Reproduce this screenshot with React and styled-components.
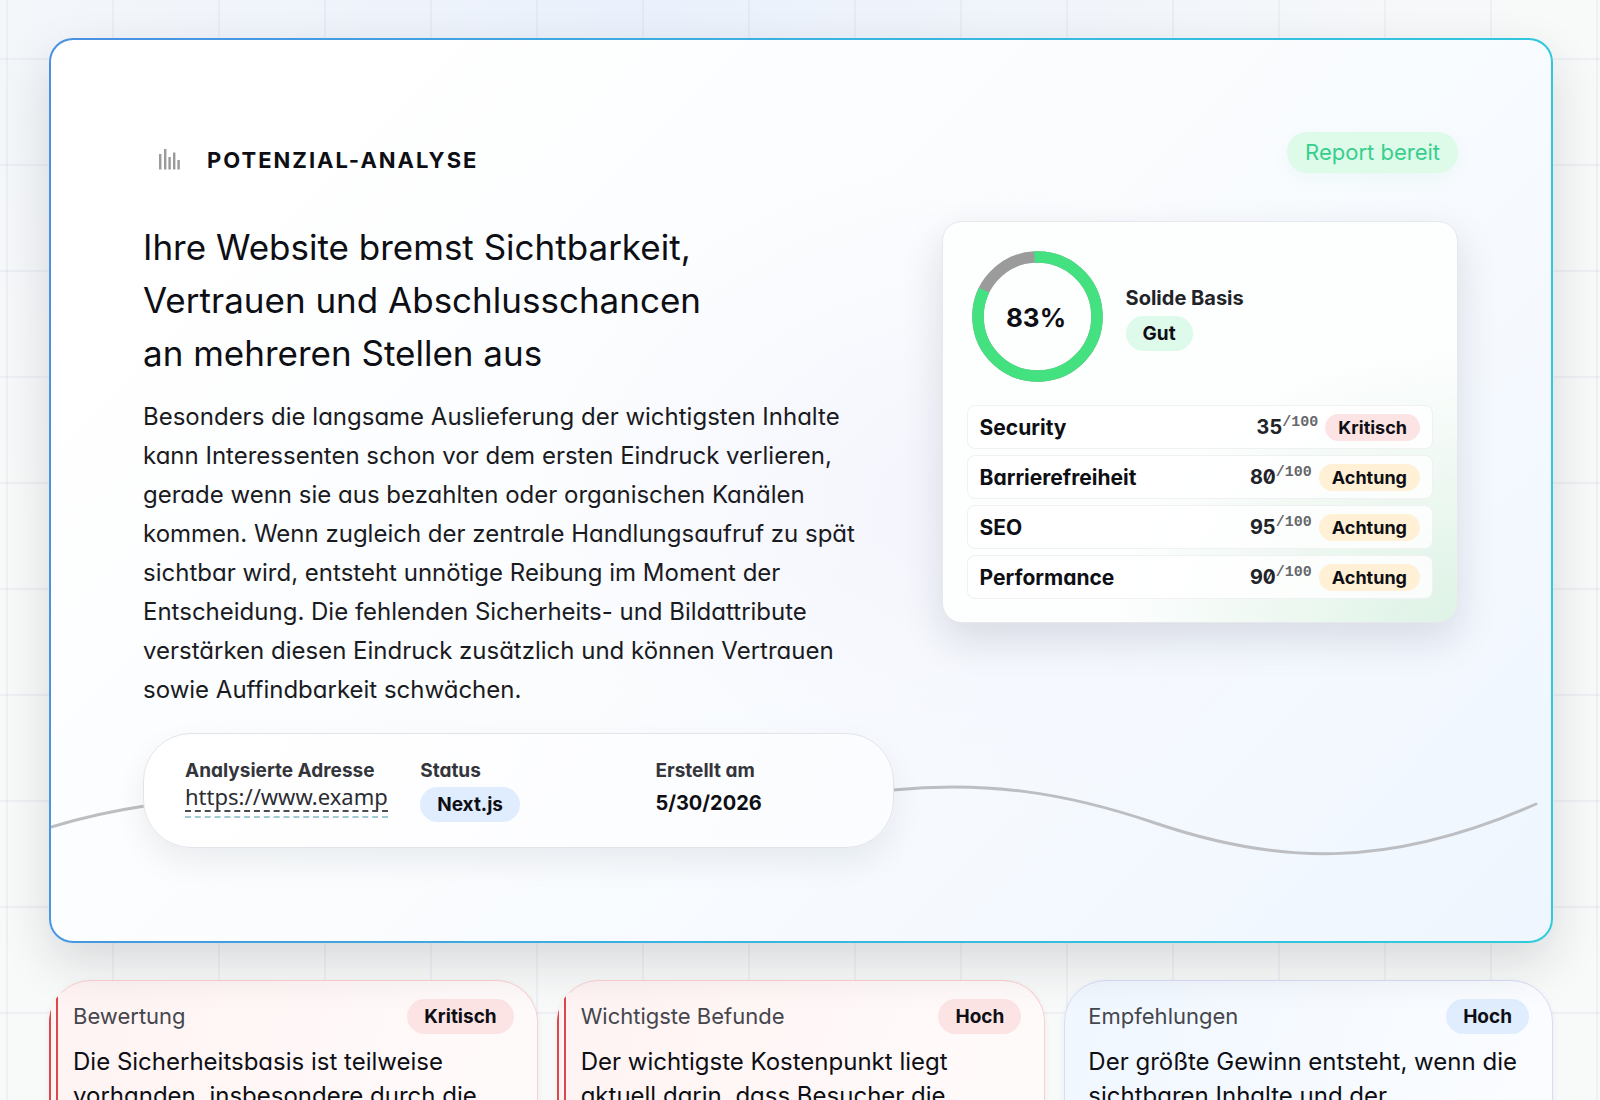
import styled, { createGlobalStyle } from "styled-components";

const GlobalStyle = createGlobalStyle`
  *, *::before, *::after {
    box-sizing: border-box;
  }

  body {
    margin: 0;
    font-family: Inter, "Liberation Sans", sans-serif;
    font-feature-settings: "cv11";
    color: #0e0f14;
    background: #f8f9f9;
  }

  h1, h2, p, ul, dl, dd {
    margin: 0;
    padding: 0;
  }

  h1, h2 {
    font-feature-settings: normal;
  }
`;

const Page = styled.main`
  height: 100vh;
  overflow: hidden;
  padding: 38px 47px 0 49px;
  display: flex;
  flex-direction: column;
  gap: 37px;
  background:
    linear-gradient(90deg, rgba(120, 140, 200, 0.08) 2px, transparent 2px) 6px 0 /
      106px 106px,
    linear-gradient(rgba(120, 140, 200, 0.08) 2px, transparent 2px) 0 58px /
      106px 106px,
    radial-gradient(
      ellipse 900px 700px at 40% 0,
      rgba(228, 237, 253, 0.7),
      transparent
    ),
    #f8f9f9;
`;

const Hero = styled.section`
  position: relative;
  flex-shrink: 0;
  padding: 92px 93px 93px 92px;
  border: 2px solid transparent;
  border-radius: 24px;
  background:
    radial-gradient(
        ellipse 420px 320px at 60% 50%,
        rgba(240, 239, 252, 0.5),
        transparent
      )
      padding-box,
    linear-gradient(135deg, #ffffff 10%, #fafcfe 50%, #eff6ff 100%) padding-box,
    linear-gradient(100deg, #4a90e2, #39b5e0 50%, #2fcbdc) border-box;
  box-shadow: 0 20px 50px rgba(25, 28, 34, 0.14);
`;

const Wave = styled.svg`
  position: absolute;
  left: 0;
  bottom: 58px;
  width: 100%;
  height: 120px;
`;

const HeroHeader = styled.header`
  display: flex;
  justify-content: space-between;
  align-items: flex-start;
  height: 56px;
  margin-bottom: 33px;
`;

const Eyebrow = styled.p`
  display: flex;
  align-items: center;
  gap: 26px;
  height: 56px;
  padding-left: 16px;
  font-size: 22px;
  font-weight: 700;
  letter-spacing: 2px;
`;

const ReadyBadge = styled.span`
  padding: 0 18px;
  border-radius: 20px;
  background: #defbe9;
  color: #37cf8d;
  font-size: 22px;
  line-height: 41px;
  box-shadow: 0 6px 18px rgba(60, 200, 130, 0.06);
`;

const HeroGrid = styled.div`
  position: relative;
  display: grid;
  grid-template-columns: 750fr 516fr;
  gap: 48px;
  align-items: start;
`;

const Headline = styled.h1`
  font-size: 35px;
  font-weight: 400;
  line-height: 53px;
`;

const Summary = styled.p`
  margin-top: 17px;
  color: #1a1b1f;
  font-size: 24px;
  line-height: 39px;
`;

const Meta = styled.dl`
  display: grid;
  grid-template-columns: 1fr 1fr 1fr;
  height: 115px;
  margin-top: 24px;
  padding: 24px 2px 0 41px;
  border: 1px solid #e2e4ea;
  border-radius: 48px;
  background: linear-gradient(120deg, #ffffff, #fbfcff);
  box-shadow: 0 14px 32px rgba(20, 25, 40, 0.07);
`;

const MetaLabel = styled.dt`
  color: #34353b;
  font-size: 19px;
  font-weight: 700;
  line-height: 25px;
`;

const MetaValue = styled.dd`
  padding-top: ${(props) => props.$top}px;
  font-size: 20px;
  font-weight: 700;
  line-height: 30px;
`;

const AddressLink = styled.a`
  display: inline-block;
  border-bottom: 2px dashed #9fcad4;
  padding-bottom: 4px;
  color: #2b2d33;
  font-family: "Noto Sans", sans-serif;
  font-size: 22px;
  font-weight: 400;
  line-height: 27px;
  text-decoration: none;
`;

const AddressText = styled.span`
  display: block;
  border-bottom: 2px dashed #4a4c52;
`;

const tones = {
  red: "#fde4e4",
  amber: "#fff0d6",
  green: "#ddfaea",
  blue: "#e0edff",
};

const Badge = styled.span`
  display: inline-block;
  padding: 0 ${(props) => (props.$small ? 13 : 17)}px;
  border-radius: 18px;
  background: ${(props) => tones[props.$tone]};
  color: #0e0f14;
  font-size: ${(props) => (props.$small ? 18 : 19)}px;
  font-weight: 700;
  line-height: ${(props) => (props.$small ? 27 : 35)}px;
`;

const ScoreCard = styled.section`
  padding: 29px 24px;
  border: 1px solid #e6e8ec;
  border-radius: 20px;
  padding-bottom: 23px;
  background:
    radial-gradient(
      ellipse 340px 270px at 100% 100%,
      rgba(218, 241, 226, 0.9),
      transparent
    ),
    #fdfefe;
  box-shadow: 0 16px 40px rgba(20, 25, 45, 0.13);
`;

const ScoreTop = styled.div`
  display: flex;
  align-items: center;
  gap: 23px;
  height: 131px;
  margin-bottom: 23px;
  padding-left: 5px;
`;

const ScoreInfo = styled.div`
  display: flex;
  flex-direction: column;
  align-items: flex-start;
  gap: 5px;
  padding-top: 4px;
`;

const ScoreTitle = styled.h2`
  color: #222329;
  font-size: 20px;
  font-weight: 700;
  line-height: 25px;
`;

const Metrics = styled.ul`
  display: flex;
  flex-direction: column;
  gap: 6px;
  list-style: none;
`;

const Metric = styled.li`
  display: flex;
  align-items: center;
  gap: 7px;
  height: 44px;
  padding: 0 12px;
  border: 1px solid #eff1f2;
  border-radius: 8px;
  background: rgba(255, 255, 255, 0.8);
  font-size: 21px;
  font-weight: 700;
`;

const MetricName = styled.span`
  flex: 1;
`;

const MetricValue = styled.span`
  display: flex;
  color: #222329;
  font-size: 20px;
  font-feature-settings: "zero", "tnum";
  line-height: 28px;
`;

const OutOf = styled.span`
  color: #66676b;
  font-family: "Liberation Mono", monospace;
  font-size: 15px;
  line-height: 19px;
`;

const Cards = styled.div`
  display: grid;
  grid-template-columns: repeat(3, 1fr);
  gap: 19px;
  flex-shrink: 0;
`;

const alertFill = `
  linear-gradient(
    90deg,
    #d9484f 2px,
    transparent 2px 7px,
    #d9484f 7px 9px,
    transparent 9px
  ) border-box,
  linear-gradient(110deg, #fff3f3, #fffafa 80%) border-box
`;

const Card = styled.article`
  min-height: 320px;
  padding: 18px 23px;
  border: 1px solid ${(props) => (props.$alert ? "#fbd0d0" : "#d8dcf8")};
  border-left-color: ${(props) => (props.$alert ? "transparent" : "#d8dcf8")};
  border-radius: 42px;
  background: ${(props) =>
    props.$alert
      ? alertFill
      : "linear-gradient(110deg, #f0f7ff, #fafcff 80%) border-box"};
  box-shadow: 0 2px 6px rgba(20, 25, 40, 0.06);
`;

const CardHeader = styled.div`
  display: flex;
  align-items: center;
  justify-content: space-between;
  margin-bottom: 11px;
`;

const CardTitle = styled.h2`
  color: #45464c;
  font-size: 22px;
  font-weight: 400;
  line-height: 35px;
`;

const CardText = styled.p`
  font-size: 24px;
  line-height: 34px;
`;

const metrics = [
  { name: "Security", score: 35, rating: "Kritisch", tone: "red" },
  { name: "Barrierefreiheit", score: 80, rating: "Achtung", tone: "amber" },
  { name: "SEO", score: 95, rating: "Achtung", tone: "amber" },
  { name: "Performance", score: 90, rating: "Achtung", tone: "amber" },
];

const cards = [
  {
    title: "Bewertung",
    level: "Kritisch",
    alert: true,
    text: ["Die Sicherheitsbasis ist teilweise", "vorhanden, insbesondere durch die"],
  },
  {
    title: "Wichtigste Befunde",
    level: "Hoch",
    alert: true,
    text: ["Der wichtigste Kostenpunkt liegt", "aktuell darin, dass Besucher die"],
  },
  {
    title: "Empfehlungen",
    level: "Hoch",
    alert: false,
    text: ["Der größte Gewinn entsteht, wenn die", "sichtbaren Inhalte und der"],
  },
];

function BarsIcon() {
  return (
    <svg width="22" height="22" viewBox="0 0 22 22" fill="#9a9a9c" aria-hidden="true">
      <rect x="0" y="5" width="2.4" height="15.5" />
      <rect x="5" y="0" width="2.4" height="20.5" />
      <rect x="9.4" y="8" width="2.4" height="12.5" />
      <rect x="14" y="3.5" width="2.4" height="17" />
      <rect x="18.4" y="11" width="2.4" height="9.5" />
    </svg>
  );
}

function ScoreRing({ value }) {
  const radius = 59.5;
  const length = 2 * Math.PI * radius;

  return (
    <svg width="131" height="131" viewBox="0 0 131 131" role="img" aria-label={`${value}%`}>
      <g fill="none" strokeWidth="11.5" transform="rotate(-93 65.5 65.5)">
        <circle cx="65.5" cy="65.5" r={radius} stroke="#9b9b9b" />
        <circle
          cx="65.5"
          cy="65.5"
          r={radius}
          stroke="#43e17f"
          strokeDasharray={`${(length * value) / 100} ${length}`}
        />
      </g>
      <text x="64" y="76" textAnchor="middle" fontSize="26" fontWeight="700" fill="#0e0f14">
        {value}%
      </text>
    </svg>
  );
}

export default function App() {
  return (
    <>
      <GlobalStyle />
      <Page>
        <Hero>
          <Wave viewBox="0 0 1500 120" preserveAspectRatio="none" aria-hidden="true">
            <path
              d="M0 64 C30 55 60 48 94 43 C300 5 500 80 842 27 C930 18 1010 28 1104 60 C1225 101 1335 107 1485 41"
              fill="none"
              stroke="#bcbec2"
              strokeWidth="3"
              strokeLinecap="round"
            />
          </Wave>
          <HeroHeader>
            <Eyebrow>
              <BarsIcon />
              POTENZIAL-ANALYSE
            </Eyebrow>
            <ReadyBadge>Report bereit</ReadyBadge>
          </HeroHeader>
          <HeroGrid>
            <div>
              <Headline>
                Ihre Website bremst Sichtbarkeit,
                <br />
                Vertrauen und Abschlusschancen
                <br />
                an mehreren Stellen aus
              </Headline>
              <Summary>
                Besonders die langsame Auslieferung der wichtigsten Inhalte
                <br />
                kann Interessenten schon vor dem ersten Eindruck verlieren,
                <br />
                gerade wenn sie aus bezahlten oder organischen Kanälen
                <br />
                kommen. Wenn zugleich der zentrale Handlungsaufruf zu spät
                <br />
                sichtbar wird, entsteht unnötige Reibung im Moment der
                <br />
                Entscheidung. Die fehlenden Sicherheits- und Bildattribute
                <br />
                verstärken diesen Eindruck zusätzlich und können Vertrauen
                <br />
                sowie Auffindbarkeit schwächen.
              </Summary>
              <Meta>
                <div>
                  <MetaLabel>Analysierte Adresse</MetaLabel>
                  <MetaValue $top={0}>
                    <AddressLink href="#adresse">
                      <AddressText>https://www.examp</AddressText>
                    </AddressLink>
                  </MetaValue>
                </div>
                <div>
                  <MetaLabel>Status</MetaLabel>
                  <MetaValue $top={4}>
                    <Badge $tone="blue">Next.js</Badge>
                  </MetaValue>
                </div>
                <div>
                  <MetaLabel>Erstellt am</MetaLabel>
                  <MetaValue $top={5}>5/30/2026</MetaValue>
                </div>
              </Meta>
            </div>
            <ScoreCard>
              <ScoreTop>
                <ScoreRing value={83} />
                <ScoreInfo>
                  <ScoreTitle>Solide Basis</ScoreTitle>
                  <Badge $tone="green">Gut</Badge>
                </ScoreInfo>
              </ScoreTop>
              <Metrics>
                {metrics.map((metric) => (
                  <Metric key={metric.name}>
                    <MetricName>{metric.name}</MetricName>
                    <MetricValue>
                      {metric.score}
                      <OutOf>/100</OutOf>
                    </MetricValue>
                    <Badge $small $tone={metric.tone}>
                      {metric.rating}
                    </Badge>
                  </Metric>
                ))}
              </Metrics>
            </ScoreCard>
          </HeroGrid>
        </Hero>
        <Cards>
          {cards.map((card) => (
            <Card key={card.title} $alert={card.alert}>
              <CardHeader>
                <CardTitle>{card.title}</CardTitle>
                <Badge $tone={card.alert ? "red" : "blue"}>{card.level}</Badge>
              </CardHeader>
              <CardText>
                {card.text[0]}
                <br />
                {card.text[1]}
              </CardText>
            </Card>
          ))}
        </Cards>
      </Page>
    </>
  );
}
